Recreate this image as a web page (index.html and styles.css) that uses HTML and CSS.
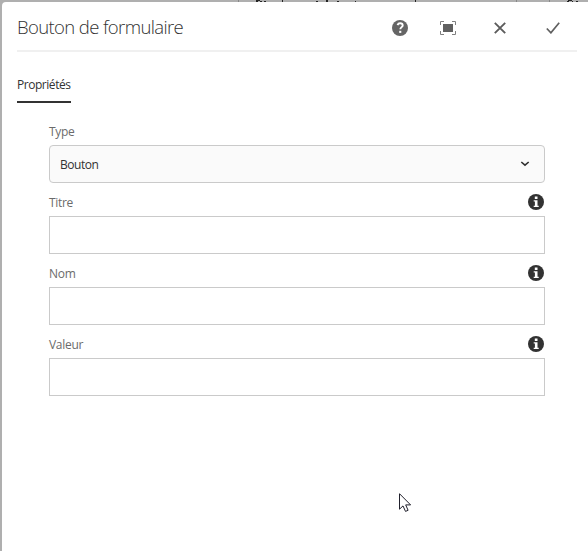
FILE: index.html
```html
<!DOCTYPE html>
<html lang="fr">
<head>
<meta charset="utf-8">
<title>Bouton de formulaire</title>
<link rel="stylesheet" href="styles.css">
</head>
<body>
<svg class="backdrop" width="588" height="2" viewBox="0 0 588 2" shape-rendering="crispEdges">
  <path fill="#888" d="M238 0h1v2h-1zM516 0h1v2h-1zM549 0h1v2h-1z"/>
  <path fill="#242424" d="M256 0h4v1h-4zM256 1h2v1h-2zM260 1h2v1h-2zM264 1h2v1h-2zM282 0h1v2h-1zM316 1h2v1h-2zM326 0h2v2h-2zM337 1h2v1h-2zM355 1h1v1h-1zM415 0h1v2h-1zM568 0h4v1h-4zM567 1h2v1h-2zM572 1h1v1h-1zM576 1h2v1h-2z"/>
</svg>
<main class="dialog">
  <header class="header">
    <h1 class="title">Bouton de formulaire</h1>
    <button class="action help" aria-label="Aide">
      <svg width="16" height="16" viewBox="0 0 16 16"><circle cx="8" cy="8" r="8" fill="#656565"/><path d="M5.500 5.100C6 3.800 7 3.300 8.100 3.300c1.500 0 2.600.8 2.600 2.100C10.700 7.100 8.300 7.200 8.300 9.300" fill="none" stroke="#fff" stroke-width="1.900"/><path d="M7.200 10.800h2.100v2.100H7.200z" fill="#fff"/></svg>
    </button>
    <button class="action full" aria-label="Plein écran">
      <svg width="16" height="14" viewBox="0 0 16 14"><path d="M3 3h10v8H3z" fill="#606060"/><path d="M.5 4V.5H4M12 .5h3.500V4M15.500 10v3.500H12M4 13.500H.5V10" fill="none" stroke="#808080"/></svg>
    </button>
    <button class="action close" aria-label="Fermer">
      <svg width="12" height="12" viewBox="0 0 12 12"><path d="M.8.8l10.400 10.400M11.200.8L.8 11.200" fill="none" stroke="#5c5c5c" stroke-width="1.900"/></svg>
    </button>
    <button class="action done" aria-label="Terminé">
      <svg width="14" height="12" viewBox="0 0 14 12"><path d="M.8 6.500l4.100 4.300L13.200.8" fill="none" stroke="#606060" stroke-width="1.700"/></svg>
    </button>
  </header>
  <nav class="tabs"><a class="tab">Propriétés</a></nav>
  <form class="form">
    <div class="label-row"><label>Type</label></div>
    <div class="control select"><span>Bouton</span>
      <svg width="10" height="6" viewBox="0 0 10 6"><path d="M1.300 1L5 4.200 8.700 1" fill="none" stroke="#303030" stroke-width="1.600"/></svg>
    </div>
    <div class="label-row"><label for="titre">Titre</label>
      <svg class="info" width="16" height="16" viewBox="0 0 16 16"><circle cx="8" cy="8" r="8" fill="#323232"/><path d="M6.800 2.500h2.700v2.400H6.800zM5.700 6.300h3.800v5.400h1.200V13H5.700v-1.300h1.200V7.600H5.700z" fill="#fff"/></svg>
    </div>
    <input class="control" id="titre" type="text">
    <div class="label-row"><label for="nom">Nom</label>
      <svg class="info" width="16" height="16" viewBox="0 0 16 16"><circle cx="8" cy="8" r="8" fill="#323232"/><path d="M6.800 2.500h2.700v2.400H6.800zM5.700 6.300h3.800v5.400h1.200V13H5.700v-1.300h1.200V7.600H5.700z" fill="#fff"/></svg>
    </div>
    <input class="control" id="nom" type="text">
    <div class="label-row"><label for="valeur">Valeur</label>
      <svg class="info" width="16" height="16" viewBox="0 0 16 16"><circle cx="8" cy="8" r="8" fill="#323232"/><path d="M6.800 2.500h2.700v2.400H6.800zM5.700 6.300h3.800v5.400h1.200V13H5.700v-1.300h1.200V7.600H5.700z" fill="#fff"/></svg>
    </div>
    <input class="control" id="valeur" type="text">
  </form>
</main>
<svg class="cursor" width="13" height="20" viewBox="0 0 13 20"><path d="M.5.7v15.500L4 12.900l2.500 5.500 2.600-1.100-2.400-5.400h4.900z" fill="#fff" stroke="#20202c"/></svg>
</body>
</html>
```
FILE: styles.css
```css
* { box-sizing: border-box; }
body {
  margin: 0;
  height: 551px;
  overflow: hidden;
  background: #afafaf;
  font-family: "Open Sans", "Noto Sans", sans-serif;
  font-size: 12px;
  color: #323232;
}
svg { display: block; flex: none; }
.dialog {
  height: 549px;
  margin-left: 2px;
  padding: 0 11px 0 15px;
  background: #fff;
  border-top-left-radius: 4px;
}
.header {
  display: flex;
  align-items: center;
  height: 50px;
  border-bottom: 2px solid #f0f0f0;
  padding-top: 3px;
}
.title {
  margin: 0;
  flex: 1;
  padding-bottom: 2px;
  font-size: 18.5px;
  font-weight: 300;
  line-height: 24px;
  letter-spacing: -0.62px;
  white-space: nowrap;
}
.action { padding: 0; border: 0; background: none; }
.full { margin-left: 32px; }
.close { margin-left: 38px; }
.done { margin: 0 17px 0 40px; }
.tabs { display: flex; height: 60px; padding-top: 22px; }
.tab {
  height: 29px;
  line-height: 22px;
  width: 54px;
  border-bottom: 2px solid #323232;
  letter-spacing: -0.46px;
  white-space: nowrap;
}
.form { padding: 0 32px; }
.label-row {
  display: flex;
  align-items: center;
  justify-content: space-between;
  height: 33px;
  padding: 5px 1px 0 0;
  color: #6b6b6b;
  letter-spacing: -0.3px;
}
.control {
  display: flex;
  align-items: center;
  justify-content: space-between;
  width: 100%;
  height: 38px;
  margin: 0;
  padding: 0 14px 0 10px;
  border: 1px solid #cacaca;
  background: #fff;
  outline: 0;
}
.select { border-radius: 4px; background: #fafafa; letter-spacing: -0.45px; }
.backdrop { width: 588px; }
.cursor { position: absolute; left: 399px; top: 493px; }
```
